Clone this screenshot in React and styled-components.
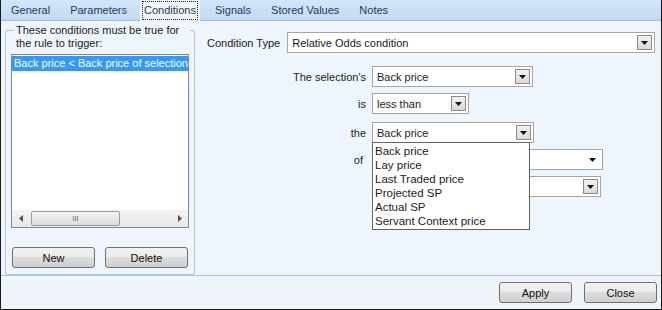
import React from 'react';
import styled, { createGlobalStyle } from 'styled-components';

const GlobalStyle = createGlobalStyle`
  html, body {
    margin: 0;
    padding: 0;
    background: #ffffff;
  }
  * {
    box-sizing: border-box;
  }
`;

const tabs = ['General', 'Parameters', 'Conditions', 'Signals', 'Stored Values', 'Notes'];
const priceOptions = ['Back price', 'Lay price', 'Last Traded price', 'Projected SP', 'Actual SP', 'Servant Context price'];

const Arrow = ({ flat }) => (
  <ArrowButton $flat={flat}>
    <svg width="7" height="4" viewBox="0 0 7 4">
      <path d="M0 0h7L3.5 4z" fill="#111" />
    </svg>
  </ArrowButton>
);

const Combo = ({ width, value, flat }) => (
  <ComboBox $width={width}>
    <ComboText>{value}</ComboText>
    <Arrow flat={flat} />
  </ComboBox>
);

const App = () => {
  return (
    <>
      <GlobalStyle />
      <Window>
        <TabBar>
          {tabs.map((t) => (
            <Tab key={t} $active={t === 'Conditions'}>
              <TabLabel $active={t === 'Conditions'}>{t}</TabLabel>
            </Tab>
          ))}
        </TabBar>

        <Panel>
          <GroupBox>
            <GroupCaption>These conditions must be true for the rule to trigger:</GroupCaption>
            <ListBox>
              <ListItems>
                <ListItem $selected>Back price &lt; Back price of selection</ListItem>
              </ListItems>
              <HScroll>
                <ScrollArrow>
                  <svg width="4" height="7" viewBox="0 0 4 7">
                    <path d="M4 0v7L0 3.5z" fill="#555" />
                  </svg>
                </ScrollArrow>
                <Track>
                  <Thumb>III</Thumb>
                </Track>
                <ScrollArrow>
                  <svg width="4" height="7" viewBox="0 0 4 7">
                    <path d="M0 0v7L4 3.5z" fill="#555" />
                  </svg>
                </ScrollArrow>
              </HScroll>
            </ListBox>
            <ButtonRow>
              <Button $width={83}>New</Button>
              <Button $width={83}>Delete</Button>
            </ButtonRow>
          </GroupBox>

          <RightPane>
            <TypeRow>
              <Label>Condition Type</Label>
              <Combo width={368} value="Relative Odds condition" />
            </TypeRow>

            <Form>
              <FieldLabel>The selection's</FieldLabel>
              <Combo width={161} value="Back price" />

              <FieldLabel>is</FieldLabel>
              <Combo width={97} value="less than" />

              <FieldLabel $extra={2}>the</FieldLabel>
              <ComboAnchor $extra={2}>
                <Combo width={162} value="Back price" />
                <DropList>
                  {priceOptions.map((o) => (
                    <DropItem key={o}>{o}</DropItem>
                  ))}
                </DropList>
              </ComboAnchor>

              <FieldLabel $shift={3}>of</FieldLabel>
              <Combo width={231} value="" flat />

              <FieldLabel />
              <Combo width={229} value="" />
            </Form>
          </RightPane>
        </Panel>

        <Footer>
          <Button $width={73}>Apply</Button>
          <Button $width={73}>Close</Button>
        </Footer>
      </Window>
    </>
  );
};

const Window = styled.div`
  width: 662px;
  height: 310px;
  display: flex;
  flex-direction: column;
  border: 1px solid #1a1a1a;
  border-top: none;
  background: #eef4fb;
  font-family: "Liberation Sans", Arial, sans-serif;
  font-size: 11px;
  color: #1b1b1b;
  overflow: hidden;
`;

const TabBar = styled.div`
  height: 21px;
  flex: none;
  display: flex;
  align-items: stretch;
  padding-left: 0;
  background: linear-gradient(#d3e6fa, #c2daf4);
  border-bottom: 1px solid #a3bfdf;
`;

const Tab = styled.div`
  display: flex;
  align-items: center;
  padding: 0 ${(p) => (p.$active ? '2px' : '8px')};
  margin: ${(p) => (p.$active ? '0 5px 0 3px' : '0')};
  background: ${(p) => (p.$active ? '#f2f7fd' : 'transparent')};
  margin-bottom: ${(p) => (p.$active ? '-1px' : '0')};
  color: #233b5a;
`;

const TabLabel = styled.span`
  padding: 1px 1px 2px;
  border: 1px dotted ${(p) => (p.$active ? '#222' : 'transparent')};
  line-height: 14px;
`;

const Panel = styled.div`
  flex: none;
  height: 255px;
  display: flex;
  align-items: flex-start;
  padding: 6px 0 0 4px;
  background: #eef5fc;
  border-bottom: 1px solid #a9c3e0;
`;

const GroupBox = styled.div`
  width: 190px;
  height: 245px;
  margin-top: 3px;
  border: 1px solid #b8c2cc;
  border-radius: 2px;
  padding: 0 5px;
  display: flex;
  flex-direction: column;
`;

const GroupCaption = styled.div`
  margin: -7px 0 0 3px;
  padding: 0 2px;
  width: 176px;
  line-height: 13px;
  background: #eef5fc;
`;

const ListBox = styled.div`
  margin-top: 4px;
  width: 178px;
  height: 174px;
  border: 1px solid #828790;
  background: #fff;
  display: flex;
  flex-direction: column;
`;

const ListItems = styled.div`
  flex: 1;
  padding: 1px 0 0;
`;

const ListItem = styled.div`
  height: 15px;
  line-height: 15px;
  padding-left: 2px;
  white-space: nowrap;
  overflow: hidden;
  background: ${(p) => (p.$selected ? '#3399ff' : 'transparent')};
  color: ${(p) => (p.$selected ? '#fff' : 'inherit')};
`;

const HScroll = styled.div`
  height: 17px;
  display: flex;
  align-items: center;
  background: linear-gradient(#f3f3f3, #e8e8e8);
`;

const ScrollArrow = styled.div`
  width: 17px;
  height: 17px;
  display: flex;
  align-items: center;
  justify-content: center;
`;

const Track = styled.div`
  flex: 1;
  height: 17px;
  display: flex;
  align-items: center;
`;

const Thumb = styled.div`
  margin-left: 2px;
  width: 89px;
  height: 15px;
  border: 1px solid #9b9b9b;
  border-radius: 2px;
  background: linear-gradient(#f4f4f4, #dcdcdc);
  display: flex;
  align-items: center;
  justify-content: center;
  font-size: 7px;
  letter-spacing: 0;
  color: #555;
`;

const ButtonRow = styled.div`
  margin-top: 19px;
  display: flex;
  justify-content: space-between;
  padding: 0 1px;
`;

const Button = styled.div`
  width: ${(p) => p.$width}px;
  height: 21px;
  display: flex;
  align-items: center;
  justify-content: center;
  border: 1px solid #707070;
  border-radius: 3px;
  background: linear-gradient(#f2f2f2 0%, #ebebeb 45%, #dddddd 50%, #cfcfcf 100%);
  color: #111;
`;

const RightPane = styled.div`
  flex: 1;
  padding: 0 0 0 12px;
  display: flex;
  flex-direction: column;
`;

const TypeRow = styled.div`
  display: flex;
  align-items: center;
  gap: 7px;
  margin-top: 5px;
`;

const Label = styled.span`
  white-space: nowrap;
`;

const Form = styled.div`
  margin-top: 13px;
  display: grid;
  grid-template-columns: 159px auto;
  column-gap: 6px;
  row-gap: 6px;
  justify-items: start;
  align-items: center;
`;

const FieldLabel = styled.span`
  justify-self: end;
  white-space: nowrap;
  margin-top: ${(p) => p.$extra || 0}px;
  margin-right: ${(p) => p.$shift || 0}px;
`;

const ComboAnchor = styled.div`
  position: relative;
  margin-top: ${(p) => p.$extra || 0}px;
`;

const ComboBox = styled.div`
  width: ${(p) => p.$width}px;
  height: 21px;
  display: flex;
  align-items: center;
  border: 1px solid #a5a5a5;
  background: #fff;
  padding: 0 2px 0 4px;
`;

const ComboText = styled.span`
  flex: 1;
  white-space: nowrap;
`;

const ArrowButton = styled.div`
  width: 15px;
  height: 15px;
  display: flex;
  align-items: center;
  justify-content: center;
  border: 1px solid ${(p) => (p.$flat ? 'transparent' : '#8a8a8a')};
  background: ${(p) => (p.$flat ? 'transparent' : 'linear-gradient(#f2f2f2, #d9d9d9)')};
`;

const DropList = styled.div`
  position: absolute;
  top: 20px;
  left: 0;
  width: 158px;
  border: 1px solid #646464;
  background: #fff;
  z-index: 5;
  padding: 1px 0;
`;

const DropItem = styled.div`
  height: 14px;
  line-height: 14px;
  padding-left: 2px;
  white-space: nowrap;
  font-size: 11.5px;
`;

const Footer = styled.div`
  flex: 1;
  display: flex;
  justify-content: flex-end;
  align-items: flex-start;
  gap: 12px;
  padding: 6px 4px 0 0;
  background: #eff4fa;
`;

export default App;
